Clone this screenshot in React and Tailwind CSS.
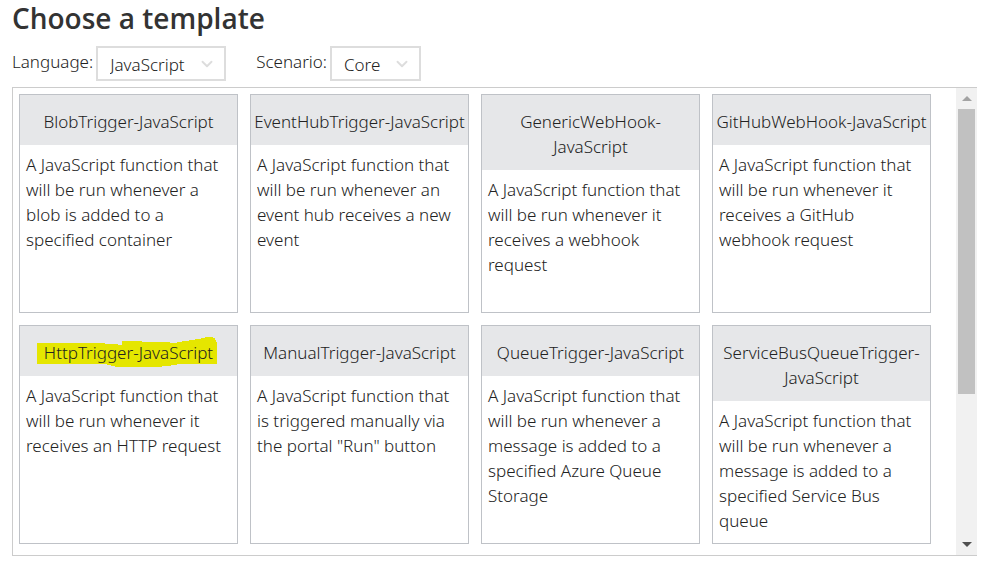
import { ChevronDown } from "lucide-react";

const templates = [
  {
    name: "BlobTrigger-JavaScript",
    text: "A JavaScript function that will be run whenever a blob is added to a specified container",
  },
  {
    name: "EventHubTrigger-JavaScript",
    text: "A JavaScript function that will be run whenever an event hub receives a new event",
  },
  {
    name: "GenericWebHook-JavaScript",
    text: "A JavaScript function that will be run whenever it receives a webhook request",
  },
  {
    name: "GitHubWebHook-JavaScript",
    text: "A JavaScript function that will be run whenever it receives a GitHub webhook request",
  },
  {
    name: "HttpTrigger-JavaScript",
    text: "A JavaScript function that will be run whenever it receives an HTTP request",
    marked: true,
  },
  {
    name: "ManualTrigger-JavaScript",
    text: 'A JavaScript function that is triggered manually via the portal "Run" button',
  },
  {
    name: "QueueTrigger-JavaScript",
    text: "A JavaScript function that will be run whenever a message is added to a specified Azure Queue Storage",
  },
  {
    name: "ServiceBusQueueTrigger-JavaScript",
    text: "A JavaScript function that will be run whenever a message is added to a specified Service Bus queue",
  },
];

function Picker({ id, label, options, width }) {
  return (
    <div className="flex items-start gap-[3px]">
      <label htmlFor={id} className="pt-[3px]">
        {label}
      </label>
      <div className={"relative " + width}>
        <select
          id={id}
          className="block h-[35px] w-full appearance-none border-2 border-[#ddd] bg-white pt-0.5 pl-3"
        >
          {options.map((o) => (
            <option key={o}>{o}</option>
          ))}
        </select>
        <ChevronDown
          className="pointer-events-none absolute top-[9px] right-2.5 size-[18px] text-[#ddd]"
          strokeWidth={2.5}
        />
      </div>
    </div>
  );
}

function Marker() {
  return (
    <svg
      aria-hidden="true"
      viewBox="0 0 180 30"
      className="absolute -top-[3px] -left-[7px] h-[30px] w-[180px]"
    >
      <path
        d="M0 6H68V7H81V8H85V4H105V5H133V6H140V5H145V4H152V3H158V2H164V1H168V0H176V1H178V3H179V5H180V27H140V28H134V29H125V30H78V29H74V28H70V27H0Z"
        fill="#e5e600"
      />
    </svg>
  );
}

function Card({ name, text, marked }) {
  return (
    <button
      type="button"
      className="flex h-[219px] w-[219px] flex-col items-stretch justify-start border border-[#bfc2c7] bg-white text-left"
    >
      <span className="flex justify-center bg-[#e6e7e9] px-0.5 pt-3.5 pb-[11px] text-center">
        <span className="relative">
          {marked && <Marker />}
          <span className="relative">{name}</span>
        </span>
      </span>
      <span className="px-1.5 pt-[7px]">{text}</span>
    </button>
  );
}

function ScrollBar() {
  return (
    <div className="flex w-[21px] shrink-0 flex-col bg-[#f1f1f1] px-0.5">
      <button type="button" aria-label="Scroll up" className="flex h-[21px] items-center justify-center">
        <svg viewBox="0 0 10 5" className="h-[5px] w-2.5" fill="#a3a3a3">
          <path d="M5 0L10 5H0Z" />
        </svg>
      </button>
      <div className="flex-1">
        <div className="h-[67%] bg-[#c1c1c1]" />
      </div>
      <button type="button" aria-label="Scroll down" className="flex h-[21px] items-center justify-center">
        <svg viewBox="0 0 10 5" className="h-[5px] w-2.5" fill="#505050">
          <path d="M0 0H10L5 5Z" />
        </svg>
      </button>
    </div>
  );
}

export default function App() {
  return (
    <main className="bg-white px-3 font-['Noto_Sans','Open_Sans',sans-serif] text-[17px] leading-[25px] font-light text-[#222]">
      <h1 className="pt-0.5 font-['Open_Sans','Noto_Sans',sans-serif] text-[28px] leading-8 font-semibold text-[#333]">
        Choose a template
      </h1>
      <div className="flex gap-[30px] pt-3 pb-1.5">
        <Picker id="language" label="Language:" options={["JavaScript"]} width="w-[130px]" />
        <Picker id="scenario" label="Scenario:" options={["Core"]} width="w-[91px]" />
      </div>
      <section className="flex border-y border-l border-[#ccc]">
        <div className="flex flex-1 flex-wrap gap-3 pt-1.5 pb-[11px] pl-1.5">
          {templates.map((t) => (
            <Card key={t.name} {...t} />
          ))}
        </div>
        <ScrollBar />
      </section>
    </main>
  );
}
